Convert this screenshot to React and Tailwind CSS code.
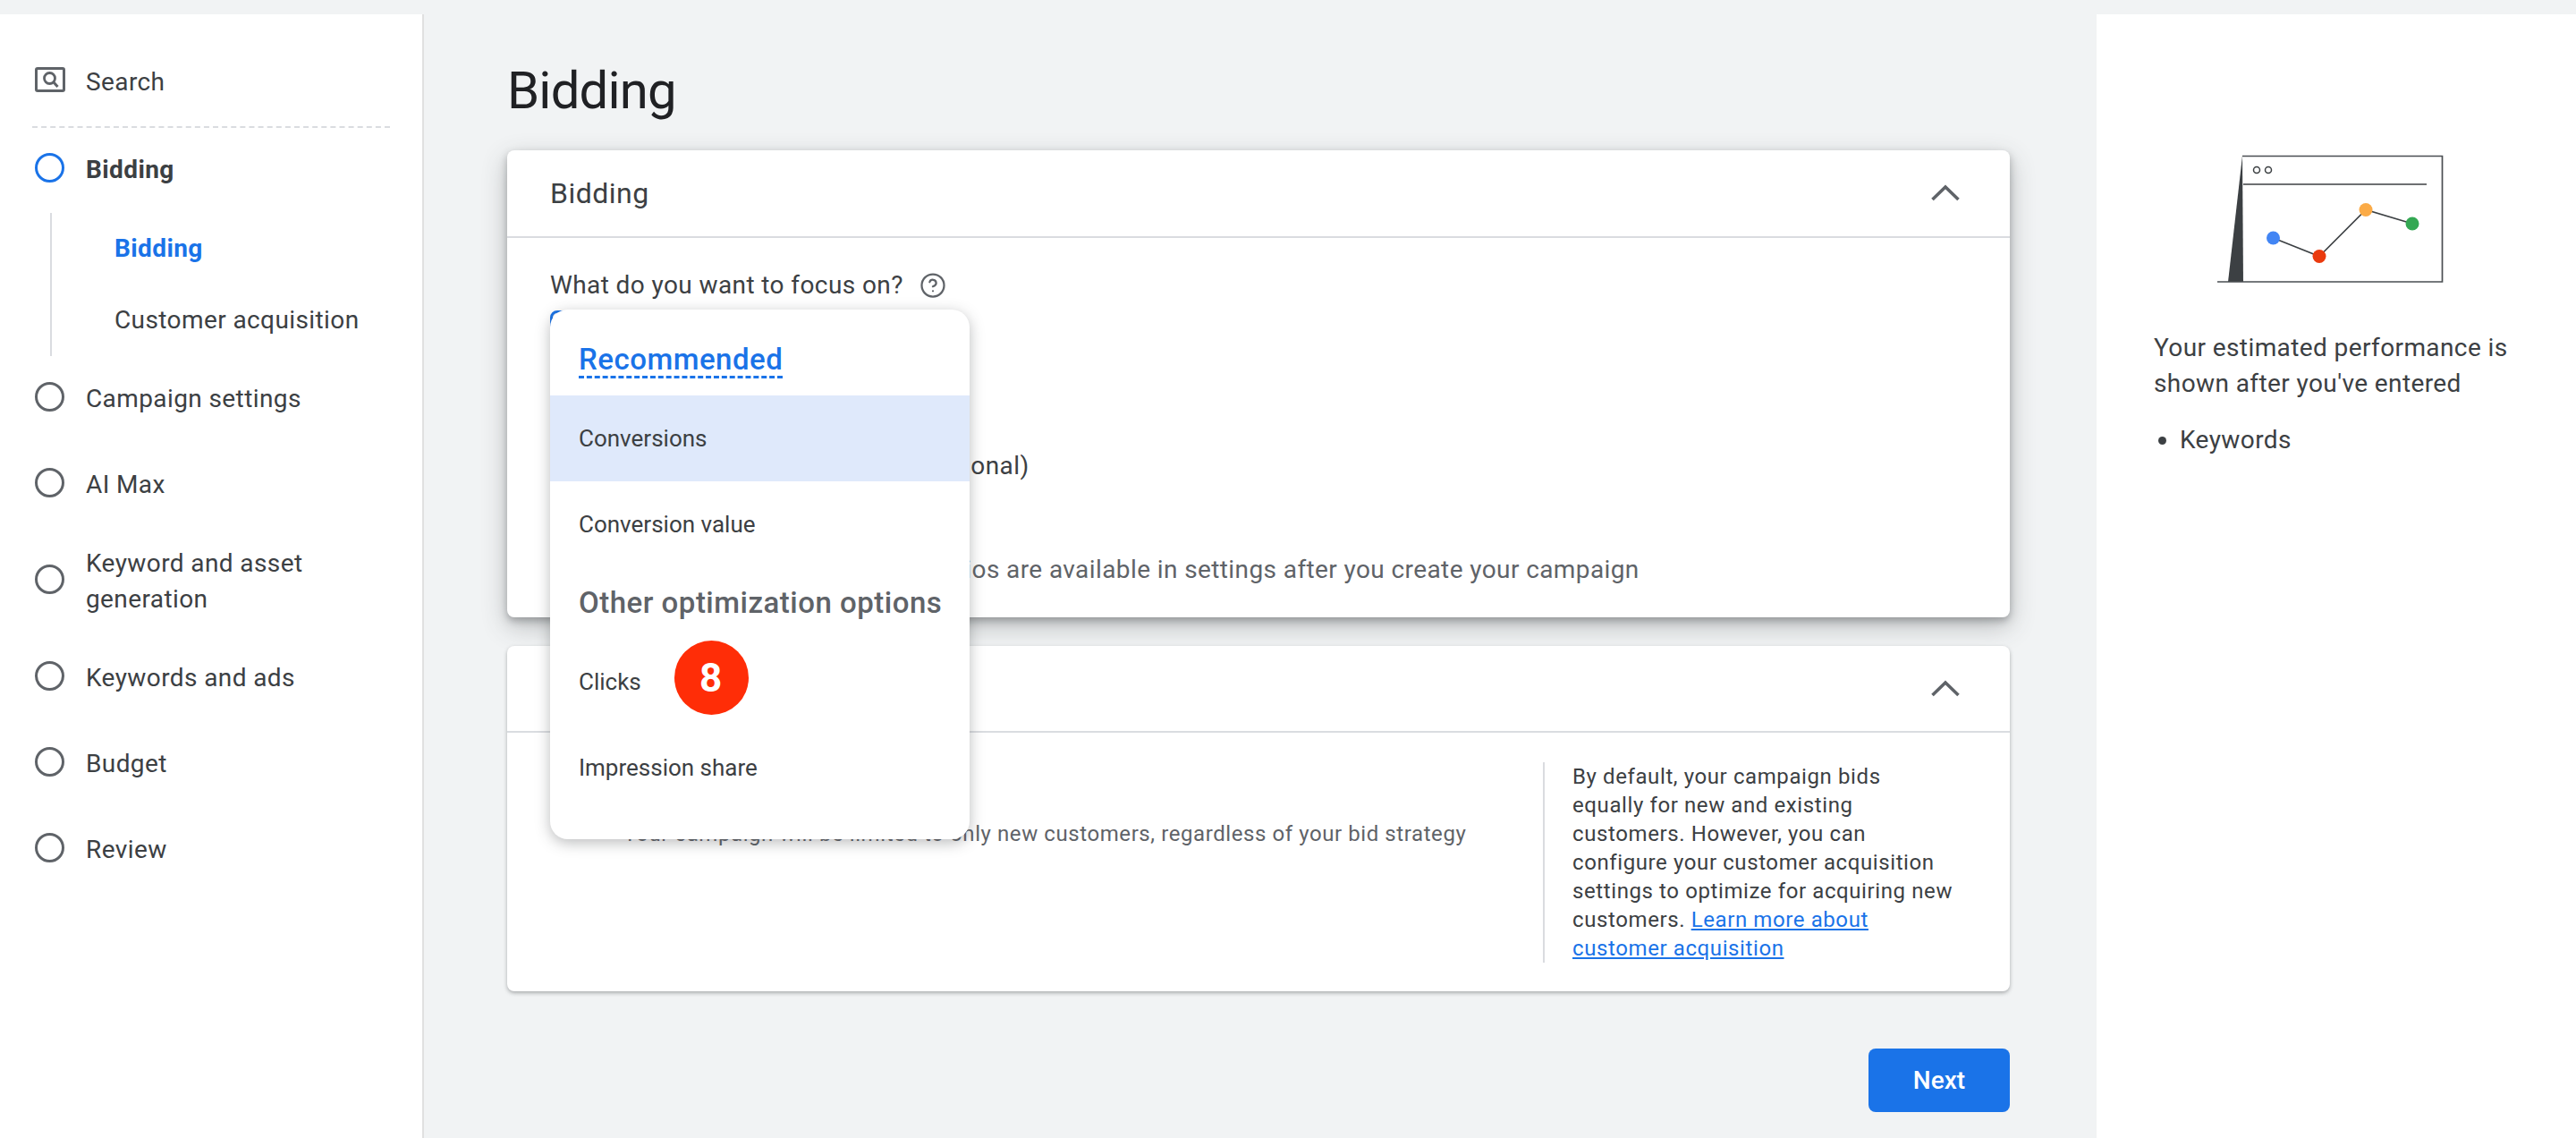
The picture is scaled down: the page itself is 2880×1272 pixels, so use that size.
import React from "react";
import { CircleHelp } from "lucide-react";

const steps = [
  { label: "Campaign settings" },
  { label: "AI Max" },
  { label: "Keyword and asset generation", tall: true },
  { label: "Keywords and ads" },
  { label: "Budget" },
  { label: "Review" },
];

function Chevron() {
  return (
    <svg width="34" height="20" viewBox="0 0 34 20" fill="none" stroke="#5f6368" strokeWidth="3.6">
      <path d="M2.5 17 L17 3 L31.5 17" />
    </svg>
  );
}

function Sidebar() {
  return (
    <aside className="w-[474px] shrink-0 bg-white border-r-2 border-[#e0e0e0] pt-[50px]">
      <div className="h-[50px] flex items-center pl-[39px]">
        <svg width="34" height="28" viewBox="0 0 34 28" fill="none" className="shrink-0 mb-[5px]">
          <rect x="1.5" y="1.5" width="31" height="25" rx="1.5" stroke="#5f6368" strokeWidth="3" />
          <circle cx="16.5" cy="12.5" r="6" stroke="#5f6368" strokeWidth="2.8" />
          <path d="M21 17 L25.5 22" stroke="#5f6368" strokeWidth="3" />
        </svg>
        <span className="ml-[23px] mt-[2px] text-[28px] tracking-[0.4px] text-[#3c4043]">Search</span>
      </div>
      <div className="mt-[25px] mx-[36px] border-t-2 border-dashed border-[#dadce0]" />
      <div className="h-[95px] flex items-center pl-[39px]">
        <div className="w-[33px] h-[33px] rounded-full border-[3px] border-[#1a73e8] shrink-0 mb-[7px]" />
        <span className="ml-[24px] mb-[1px] text-[28px] font-bold tracking-[0.4px] text-[#3c4043]">Bidding</span>
      </div>
      <div className="ml-[56px] h-[160px] border-l-2 border-[#dadce0] pl-[70px] text-[28px] tracking-[0.4px]">
        <div className="h-[80px] flex items-center font-bold text-[#1a73e8]">Bidding</div>
        <div className="h-[80px] flex items-center text-[#3c4043]">Customer acquisition</div>
      </div>
      {steps.map((s) => (
        <div key={s.label} className={`${s.tall ? "h-[120px]" : "h-[96px]"} flex items-center pl-[39px]`}>
          <div className="w-[33px] h-[33px] rounded-full border-[3px] border-[#5f6368] shrink-0 mb-[6px]" />
          <span className="ml-[24px] w-[340px] text-[28px] leading-[40px] tracking-[0.4px] text-[#3c4043]">{s.label}</span>
        </div>
      ))}
    </aside>
  );
}

function FocusMenu() {
  return (
    <div className="absolute left-[48px] top-[178px] z-10 w-[469px] h-[592px] bg-white rounded-[20px] shadow-[0_4px_16px_rgba(60,64,67,0.35)] overflow-hidden text-[#3c4043]">
      <div className="h-[96px] pt-[17px] pl-[32px] flex items-center">
        <span className="text-[33px] leading-[36px] pt-[1px] font-medium tracking-[0.5px] text-[#1a73e8] border-b-[3px] border-dashed border-[#1a73e8]">Recommended</span>
      </div>
      <div className="h-[96px] pl-[32px] flex items-center bg-[#dfe9fb] text-[26px]">Conversions</div>
      <div className="h-[96px] pl-[32px] flex items-center text-[26px]">Conversion value</div>
      <div className="h-[80px] pl-[32px] flex items-center text-[33px] font-medium tracking-[0.5px] text-[#5f6368]">Other optimization options</div>
      <div className="h-[96px] pl-[32px] flex items-center text-[26px]">Clicks</div>
      <div className="h-[96px] pl-[32px] flex items-center text-[26px]">Impression share</div>
      <div className="absolute left-[139px] top-[370px] w-[83px] h-[83px] rounded-full bg-[#ff2d07] text-white text-[44px] font-bold flex items-center justify-center pr-[2px]">8</div>
    </div>
  );
}

function BiddingCard() {
  return (
    <section className="relative h-[522px] bg-white rounded-[8px] shadow-[0_4px_8px_rgba(60,64,67,0.35),0_10px_28px_rgba(60,64,67,0.3)]">
      <div className="h-[98px] border-b-2 border-[#dadce0] pl-[48px] pr-[55px] flex items-center justify-between">
        <span className="text-[32px] tracking-[0.5px] text-[#3c4043]">Bidding</span>
        <Chevron />
      </div>
      <div className="pl-[48px] pt-[33px] text-[28px] text-[#3c4043]">
        <div className="flex items-center h-[40px] tracking-[0.4px]">
          <span>What do you want to focus on?</span>
          <CircleHelp size={30} strokeWidth={1.8} color="#5f6368" className="ml-[18px]" />
        </div>
        <div className="mt-[8px] w-[40px] h-[40px] rounded-[8px] border-[3px] border-[#1a73e8]" />
        <div className="mt-[114px] pl-[57px] h-[40px] flex items-center tracking-[0.4px] whitespace-nowrap">Set a target cost per action (optional)</div>
        <div className="mt-[76px] h-[40px] flex items-center pl-[198px] text-[#5f6368] tracking-[0.4px] whitespace-nowrap">Other bidding scenarios are available in settings after you create your campaign</div>
      </div>
      <FocusMenu />
    </section>
  );
}

function AcquisitionCard() {
  return (
    <section className="relative mt-[32px] h-[386px] bg-white rounded-[8px] shadow-[0_2px_4px_rgba(60,64,67,0.4)]">
      <div className="h-[97px] border-b-2 border-[#dadce0] pl-[48px] pr-[55px] flex items-center justify-between">
        <span className="text-[32px] tracking-[0.5px] text-[#3c4043]">Customer acquisition</span>
        <Chevron />
      </div>
      <div className="flex pt-[33px] pl-[48px]">
        <div className="flex-1 min-w-0">
          <div className="h-[40px] mt-[7px] flex items-center pl-[82px] text-[28px] text-[#3c4043]">Bid for new customers only</div>
          <div className="mt-[17px] pl-[82px] text-[24px] leading-[32px] tracking-[0.58px] text-[#5f6368]">Your campaign will be limited to only new customers, regardless of your bid strategy</div>
        </div>
        <div className="ml-[40px] w-[467px] h-[224px] border-l-2 border-[#dadce0] pl-[31px] text-[24px] leading-[32px] tracking-[0.6px] text-[#3c4043] shrink-0 mr-[55px]">
          By default, your campaign bids<br />
          equally for new and existing<br />
          customers. However, you can<br />
          configure your customer acquisition<br />
          settings to optimize for acquiring new<br />
          customers.{" "}
          <a href="#" className="text-[#1a73e8] underline">Learn more about<br />customer acquisition</a>
        </div>
      </div>
    </section>
  );
}

function PerformancePanel() {
  return (
    <aside className="w-[536px] shrink-0 bg-white pl-[64px] pr-[40px] pt-[154px] text-[28px] leading-[40px] tracking-[0.4px] text-[#3c4043]">
      <svg width="260" height="150" viewBox="0 0 260 150" fill="none" className="ml-[67px]">
        <path d="M32 4 L16 145 L33 145 Z" fill="#3c4043" />
        <path d="M32 4.5 H255.5 V145 H4" stroke="#4a4e52" strokeWidth="1.7" />
        <path d="M33 36 H238" stroke="#3c4043" strokeWidth="1.7" />
        <circle cx="48" cy="20" r="3.5" stroke="#3c4043" strokeWidth="1.5" />
        <circle cx="61" cy="20" r="3.5" stroke="#3c4043" strokeWidth="1.5" />
        <path d="M66.5 96 L118 116.5 L170 64.5 L222 80" stroke="#3c4043" strokeWidth="1.6" />
        <circle cx="66.5" cy="96" r="7.5" fill="#4285f4" />
        <circle cx="118" cy="116.5" r="7.5" fill="#ea3a0e" />
        <circle cx="170" cy="64.5" r="7.5" fill="#fbab47" />
        <circle cx="222" cy="80" r="7.5" fill="#34a853" />
      </svg>
      <p className="mt-[49px]">Your estimated performance is shown after you've entered</p>
      <div className="mt-[23px] flex items-center">
        <span className="ml-[5px] w-[9px] h-[9px] rounded-full bg-[#3c4043]" />
        <span className="ml-[15px]">Keywords</span>
      </div>
    </aside>
  );
}

export default function App() {
  return (
    <div className="h-[1272px] overflow-hidden bg-[#f1f3f4] pt-[16px] flex font-[Roboto,sans-serif]">
      <Sidebar />
      <main className="flex-1 min-w-0 pl-[93px] pr-[97px]">
        <h1 className="h-[152px] pt-[44px] text-[58px] leading-[82px] tracking-[-0.8px] text-[#202124]">Bidding</h1>
        <BiddingCard />
        <AcquisitionCard />
        <div className="mt-[64px] flex justify-end">
          <button className="w-[158px] h-[71px] rounded-[8px] bg-[#1a73e8] text-white text-[28px] font-medium">Next</button>
        </div>
      </main>
      <PerformancePanel />
    </div>
  );
}
